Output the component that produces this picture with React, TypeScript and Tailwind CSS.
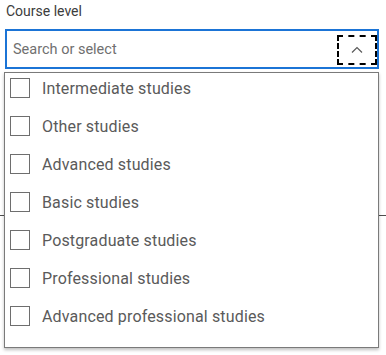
import React from "react";

const items = [
  "Intermediate studies",
  "Other studies",
  "Advanced studies",
  "Basic studies",
  "Postgraduate studies",
  "Professional studies",
  "Advanced professional studies",
];

export default function App() {
  return (
    <div
      className="relative w-[386px] h-[355px] bg-white overflow-hidden"
      style={{ fontFamily: "Roboto, 'Noto Sans', sans-serif" }}
    >
      <div className="h-[29px] pl-[6px] pt-[1px] text-[14px] leading-[20px] text-[#3c3c3c]">
        Course level
      </div>
      <div className="ml-[5px] w-[374px] h-[40px] border-2 border-[#1b74d6] flex items-center pl-[6px] pr-0">
        <span className="flex-1 text-[14.5px] text-[#707070] pt-[1px]">Search or select</span>
        <div className="w-[40px] h-[30px] mt-[2px] border-2 border-dashed border-black flex items-center justify-center">
          <svg width="12" height="8" viewBox="0 0 12 8" fill="none">
            <path d="M1 6.5 L6 1.5 L11 6.5" stroke="#5a5a5a" strokeWidth="1.2" />
          </svg>
        </div>
      </div>
      <div className="mt-[146px] h-px bg-[#4d4d4d]" />
      <div className="absolute left-[4px] top-[72px] w-[375px] h-[276px] bg-white border border-[#7a7a7a] shadow-[0_2px_3px_rgba(0,0,0,0.25)] pt-[5px] pl-[5px] flex flex-col gap-[18px]">
        {items.map((t) => (
          <div key={t} className="h-[20px] flex items-center gap-[12px]">
            <div className="w-[20px] h-[20px] border border-[#6e6e6e] bg-white shrink-0" />
            <span className="text-[16px] text-[#5a5a5a] leading-[20px] tracking-[0.15px] pt-[1px]">{t}</span>
          </div>
        ))}
      </div>
    </div>
  );
}
